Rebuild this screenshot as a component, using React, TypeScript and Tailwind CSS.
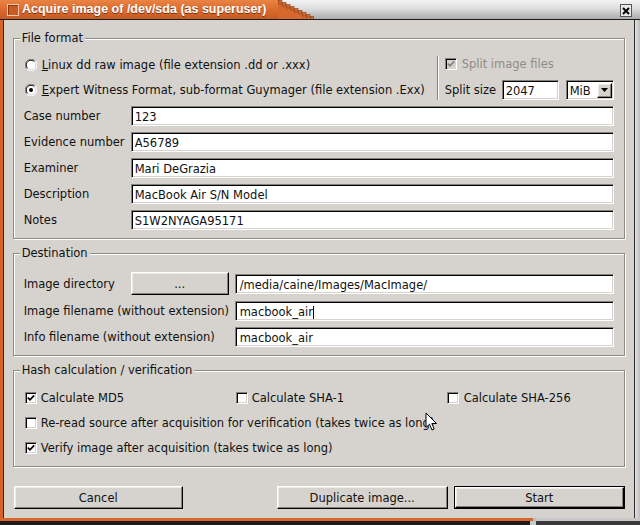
import React from "react";

const sunken =
  "border border-t-[#85827c] border-l-[#85827c] border-b-white border-r-white shadow-[inset_1px_1px_0_#000,inset_-1px_-1px_0_#d6d3ce]";
const raised =
  "border border-t-white border-l-white border-b-black border-r-black shadow-[inset_-1px_-1px_0_#85827c,inset_1px_1px_0_#ecebe8]";

function Field({ value, caret, className = "" }: { value: string; caret?: boolean; className?: string }) {
  return (
    <div className={`h-[20px] bg-white ${sunken} flex items-center pl-[3px] ${className}`}>
      <span className="whitespace-pre leading-[14px] relative top-[1px]">{value}</span>
      {caret && <span className="w-px h-[13px] bg-black relative top-[1px]" />}
    </div>
  );
}

function T({ children, className = "" }: { children: React.ReactNode; className?: string }) {
  return <span className={`whitespace-nowrap relative top-[1px] ${className}`}>{children}</span>;
}

function Check({ checked, disabled }: { checked?: boolean; disabled?: boolean }) {
  return (
    <div
      className={`w-[12px] h-[12px] shrink-0 ${disabled ? "bg-[#d6d3ce]" : "bg-white"} ${sunken} flex items-center justify-center`}
    >
      {checked && (
        <svg width="8" height="8" viewBox="0 0 8 8">
          <path
            d="M0.8 3.6 L3 5.8 L7.2 1.4"
            stroke={disabled ? "#85827c" : "#000"}
            strokeWidth="1.7"
            fill="none"
          />
        </svg>
      )}
    </div>
  );
}

function Radio({ checked }: { checked?: boolean }) {
  return (
    <svg width="12" height="12" viewBox="0 0 12 12" className="shrink-0">
      <circle cx="6" cy="6" r="5.5" fill="#fff" />
      <path d="M1.8 10.2 A5.5 5.5 0 0 1 10.2 1.8" stroke="#85827c" strokeWidth="1" fill="none" />
      <path d="M2.6 9.4 A4.4 4.4 0 0 1 9.4 2.6" stroke="#000" strokeWidth="1" fill="none" />
      <path d="M10.2 1.8 A5.5 5.5 0 0 1 1.8 10.2" stroke="#fff" strokeWidth="1" fill="none" />
      <path d="M9.4 2.6 A4.4 4.4 0 0 1 2.6 9.4" stroke="#d6d3ce" strokeWidth="1" fill="none" />
      {checked && <circle cx="6" cy="6" r="2" fill="#000" />}
    </svg>
  );
}

function Group({
  title,
  className = "",
  children,
}: {
  title: string;
  className?: string;
  children: React.ReactNode;
}) {
  return (
    <div
      className={`relative border border-[#8e8b85] shadow-[inset_1px_1px_0_#fff,1px_1px_0_#fff] pl-[10px] pr-[10px] ${className}`}
    >
      <div className="absolute top-[-8px] left-[6px] px-[2px] bg-[#d6d3ce] leading-[14px]">{title}</div>
      {children}
    </div>
  );
}

function Button({
  children,
  className = "",
  isDefault,
}: {
  children: React.ReactNode;
  className?: string;
  isDefault?: boolean;
}) {
  if (isDefault) {
    return (
      <div className={`h-[23px] border border-black ${className}`}>
        <div className={`h-full ${raised} flex items-center justify-center`}>
          <T>{children}</T>
        </div>
      </div>
    );
  }
  return (
    <div className={`h-[23px] ${raised} flex items-center justify-center ${className}`}>
      <T>{children}</T>
    </div>
  );
}

function Stairs() {
  const rects = [];
  for (let i = 0; i < 9; i++) {
    rects.push(
      <rect
        key={i}
        x={i * 4 + 0.5}
        y={i * 2 + 0.5}
        width="3.5"
        height="3.5"
        fill="#d8672d"
        stroke="#8b3f14"
        strokeWidth="0.6"
      />
    );
  }
  return (
    <svg width="36" height="19" viewBox="0 0 36 19" className="block">
      <polygon
        points="0,0 2,0 2,4 6,4 6,6 10,6 10,8 14,8 14,10 18,10 18,12 22,12 22,14 26,14 26,16 30,16 30,19 0,19"
        fill="#d8672d"
      />
      {rects}
    </svg>
  );
}

function TitleBar() {
  return (
    <div className="h-[20px] flex border-b border-[#1c1c1c] shrink-0">
      <div className="w-[278px] shrink-0 bg-gradient-to-b from-[#e98444] via-[#db6a2e] to-[#c75a22] flex items-start overflow-hidden">
        <div className="ml-[7px] mt-[4px] w-[12px] h-[12px] shrink-0 bg-[#c95b23] border border-[#f3c7a8] shadow-[inset_1px_1px_0_#8a3a12]" />
        <div className="ml-[3px] mt-[1px] text-white font-bold font-['Liberation_Sans',sans-serif] text-[12.5px] leading-[17px] whitespace-nowrap [text-shadow:0_1px_0_#7a3210]">
          Acquire image of /dev/sda (as superuser)
        </div>
      </div>
      <div className="w-[36px] shrink-0 bg-gradient-to-b from-[#f3f3f3] via-[#dadada] to-[#ababab]">
        <Stairs />
      </div>
      <div className="flex-1 bg-gradient-to-b from-[#f3f3f3] via-[#dadada] to-[#ababab] flex justify-end items-start pr-[8px]">
        <div className="mt-[4px] w-[12px] h-[13px] border border-[#555] bg-[#e8e8e8] flex items-center justify-center">
          <svg width="8" height="8" viewBox="0 0 8 8">
            <path d="M1 1 L7 7 M7 1 L1 7" stroke="#000" strokeWidth="2" />
          </svg>
        </div>
      </div>
    </div>
  );
}

function BottomFrame() {
  return (
    <div className="h-[7px] flex shrink-0">
      <div className="w-[530px] border-t-[3px] border-[#d8672d] bg-[#1c1c1c]" />
      <div className="w-[6px] bg-[#c9c9c9] flex flex-wrap">
        <div className="w-[3px] h-[3px] bg-[#d8672d]" />
        <div className="w-[3px] h-[3px] bg-[#bdbdbd]" />
      </div>
      <div className="flex-1 border-t-[3px] border-[#c8c8c8] bg-[#3a3a3a]" />
    </div>
  );
}

export default function App() {
  return (
    <div className="w-[640px] h-[525px] bg-[#d6d3ce] flex flex-col overflow-hidden relative font-['DejaVu_Sans',sans-serif] text-[11.5px] text-[#111]">
      <TitleBar />
      <div className="flex flex-1 min-h-0">
        <div className="w-[4px] bg-[#d4642a] border-r border-[#4a220c]" />
        <div className="flex-1 flex flex-col pt-[18px] pl-[9px] pr-[9px]">
          {/* File format */}
          <Group title="File format" className="pt-[16px] pb-[8px]">
            <div className="flex h-[45px]">
              <div className="flex-1 flex flex-col gap-[5px]">
                <div className="h-[20px] flex items-center gap-[5px] pl-[1px]">
                  <Radio />
                  <T>
                    <span className="underline">L</span>inux dd raw image (file extension .dd or .xxx)
                  </T>
                </div>
                <div className="h-[20px] flex items-center gap-[5px] pl-[1px]">
                  <Radio checked />
                  <T>
                    <span className="underline">E</span>xpert Witness Format, sub-format Guymager (file extension .Exx)
                  </T>
                </div>
              </div>
              <div className="w-[2px] mt-[1px] border-l border-[#85827c] border-r border-r-white" />
              <div className="w-[169px] ml-[6px] flex flex-col gap-[5px]">
                <div className="h-[18px] flex items-center gap-[5px]">
                  <Check checked disabled />
                  <T className="text-[#8f8c86]">Split image files</T>
                </div>
                <div className="h-[20px] flex items-center mt-[2px]">
                  <T className="w-[57px]">Split size</T>
                  <Field value="2047" className="w-[57px]" />
                  <div className={`ml-[7px] w-[48px] h-[20px] bg-white ${sunken} flex items-center pl-[3px]`}>
                    <span className="flex-1 leading-[14px] relative top-[1px]">MiB</span>
                    <div className={`w-[15px] h-[15px] mr-[1px] bg-[#d6d3ce] ${raised} flex items-center justify-center`}>
                      <svg width="7" height="4" viewBox="0 0 7 4">
                        <path d="M0 0 H7 L3.5 4 Z" fill="#000" />
                      </svg>
                    </div>
                  </div>
                </div>
              </div>
            </div>
            <div className="flex flex-col gap-[6px] mt-[6px]">
              {[
                ["Case number", "123"],
                ["Evidence number", "A56789"],
                ["Examiner", "Mari DeGrazia"],
                ["Description", "MacBook Air S/N Model"],
                ["Notes", "S1W2NYAGA95171"],
              ].map(([l, v]) => (
                <div key={l} className="flex items-center h-[20px]">
                  <T className="w-[107px]">{l}</T>
                  <Field value={v} className="flex-1" />
                </div>
              ))}
            </div>
          </Group>

          {/* Destination */}
          <Group title="Destination" className="mt-[14px] pt-[19px] pb-[8px]">
            <div className="flex items-center h-[21px]">
              <T className="w-[107px]">Image directory</T>
              <Button className="w-[98px]">...</Button>
              <Field value="/media/caine/Images/MacImage/" className="ml-[6px] flex-1 self-end pl-[4px]" />
            </div>
            <div className="flex items-center h-[20px] mt-[7px]">
              <T className="w-[211px]">Image filename (without extension)</T>
              <Field value="macbook_air" caret className="flex-1 pl-[4px]" />
            </div>
            <div className="flex items-center h-[20px] mt-[6px]">
              <T className="w-[211px]">Info filename (without extension)</T>
              <Field value="macbook_air" className="flex-1 pl-[4px]" />
            </div>
          </Group>

          {/* Hash */}
          <Group title="Hash calculation / verification" className="mt-[14px] pt-[17px] pb-[8px]">
            <div className="flex flex-col gap-[5px]">
              <div className="grid grid-cols-[211px_211px_1fr] h-[20px] items-center">
                <div className="flex items-center gap-[4px] pl-[1px]">
                  <Check checked />
                  <T>Calculate MD5</T>
                </div>
                <div className="flex items-center gap-[4px] pl-[1px]">
                  <Check />
                  <T>Calculate SHA-1</T>
                </div>
                <div className="flex items-center gap-[5px] pl-[1px]">
                  <Check />
                  <T>Calculate SHA-256</T>
                </div>
              </div>
              <div className="flex items-center gap-[4px] pl-[1px] h-[20px]">
                <Check />
                <T>Re-read source after acquisition for verification (takes twice as long)</T>
              </div>
              <div className="flex items-center gap-[4px] pl-[1px] h-[20px]">
                <Check checked />
                <T>Verify image after acquisition (takes twice as long)</T>
              </div>
            </div>
          </Group>

          <div className="flex mt-[19px] ml-[1px]">
            <Button className="w-[169px]">Cancel</Button>
            <Button className="w-[171px] ml-[94px]">Duplicate image...</Button>
            <Button className="w-[171px] ml-[6px]" isDefault>
              Start
            </Button>
          </div>
        </div>
        <div className="w-[7px] border-l border-[#2e2e2e] bg-gradient-to-r from-[#e2e2e2] to-[#bdbdbd]" />
      </div>
      <BottomFrame />

      {/* mouse pointer */}
      <svg className="absolute left-[425px] top-[412px]" width="13" height="20" viewBox="0 0 13 20">
        <path
          d="M1 1 L1 15.5 L4.5 12.2 L7 18 L9.2 17 L6.8 11.5 L11.5 11.5 Z"
          fill="#fff"
          stroke="#000"
          strokeWidth="1"
          strokeLinejoin="round"
        />
      </svg>
    </div>
  );
}
